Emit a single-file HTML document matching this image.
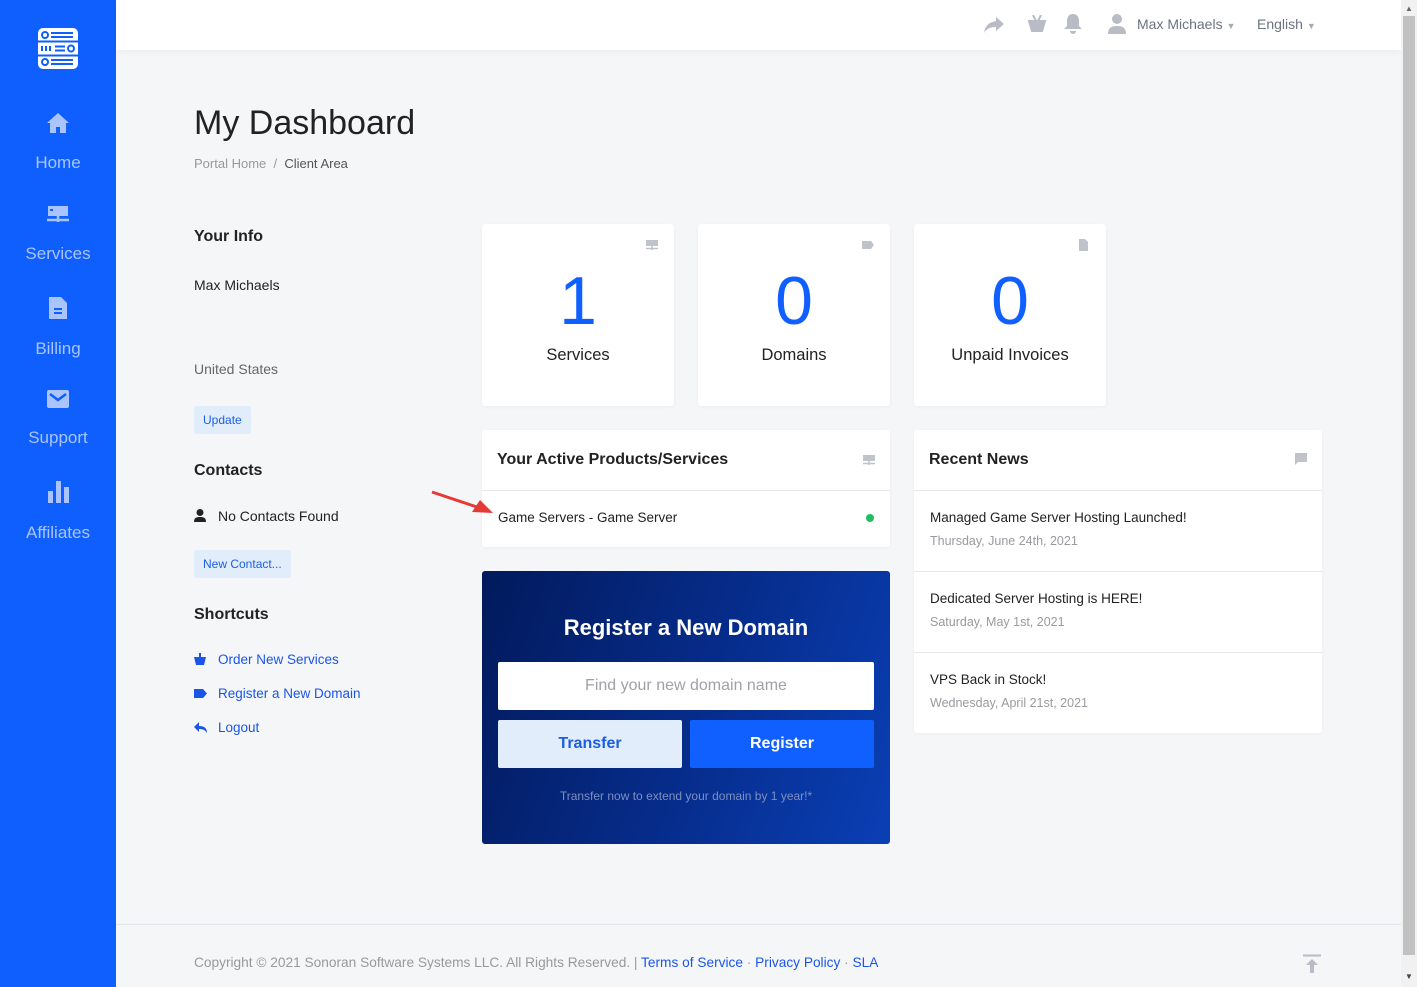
<!DOCTYPE html>
<html><head><meta charset="utf-8"><style>
*{box-sizing:border-box;margin:0;padding:0}
body{width:1417px;height:987px;overflow:hidden;background:#f5f6f8;font-family:"Liberation Sans",sans-serif;position:relative;color:#222}
.side{position:absolute;left:0;top:0;width:116px;height:987px;background:#0f5fff}
.nav{position:absolute;left:0;width:116px;text-align:center;color:#a9c4ff;font-size:17px}
.nav svg{display:block;margin:0 auto 20px}
.top{position:absolute;left:116px;top:0;width:1285px;height:50px;background:#fff;box-shadow:0 2px 6px rgba(0,0,0,.04)}
.sb{position:absolute;left:1401px;top:0;width:16px;height:987px;background:#f1f1f1}
.abs{position:absolute}
.h{font-size:16px;font-weight:bold;color:#222}
.card{position:absolute;background:#fff;border-radius:3px;box-shadow:0 1px 3px rgba(0,0,0,.04)}
.stat{width:192px;height:182px;top:224px;text-align:center}
.stat .n{font-size:68px;color:#1060ff;margin-top:42px;line-height:70px}
.stat .l{font-size:16.5px;color:#222;margin-top:10px}
.btnl{position:absolute;background:#e2edfc;color:#1a5fe0;font-size:12px;border-radius:2px;padding:0 9px;height:28px;line-height:28px}
.lnk{color:#1a55e8;font-size:13.5px}
.news{position:absolute;left:0;width:408px;height:81px;border-top:1px solid #e8e8ec;padding:19px 16px}
.news .t{font-size:13.5px;color:#222}
.news .d{font-size:12.5px;color:#9a9aa0;margin-top:9px}
</style></head><body>
<div class="side">
 <svg class="abs" style="left:38px;top:28px" width="40" height="41" viewBox="0 0 40 41"><rect width="40" height="41" rx="5" fill="#fff"/><g fill="none" stroke="#0f5fff" stroke-width="2"><circle cx="7" cy="7" r="3"/><circle cx="33" cy="20.5" r="3"/><circle cx="7" cy="34" r="3"/><path d="M13 5h22M13 9h22M4 18v5M8 18v5M12 18v5M17 18.5h10M17 22.5h10M13 32h22M13 36h22M0 13.5h40M0 27.5h40"/></g></svg>
 <div class="nav" style="top:113px"><svg width="22" height="20" viewBox="0 0 22 20"><path d="M11 0L0 10h3v10h6v-6h4v6h6V10h3z" fill="#a9c4ff"/></svg>Home</div>
 <div class="nav" style="top:206px"><svg width="22" height="18" viewBox="0 0 22 18"><rect x="1" y="0" width="20" height="10" fill="#a9c4ff"/><rect x="3" y="3" width="3" height="2" fill="#0f5fff"/><path d="M0 14h22M11 10v6" stroke="#a9c4ff" stroke-width="2.5"/></svg>Services</div>
 <div class="nav" style="top:297px"><svg width="18" height="22" viewBox="0 0 18 22"><path d="M0 0h12l6 6v16H0z" fill="#a9c4ff"/><path d="M5 12h8M5 16h8" stroke="#0f5fff" stroke-width="2"/></svg>Billing</div>
 <div class="nav" style="top:390px"><svg width="22" height="18" viewBox="0 0 22 18"><rect width="22" height="18" rx="2" fill="#a9c4ff"/><path d="M3 4l8 6 8-6" stroke="#0f5fff" stroke-width="2.5" fill="none"/></svg>Support</div>
 <div class="nav" style="top:481px"><svg width="22" height="22" viewBox="0 0 22 22"><rect x="1" y="10" width="5" height="12" fill="#a9c4ff"/><rect x="9" y="0" width="5" height="22" fill="#a9c4ff"/><rect x="17" y="6" width="5" height="16" fill="#a9c4ff"/></svg>Affiliates</div>
</div>
<div class="top">
 <svg class="abs" style="left:868px;top:17px" width="20" height="16" viewBox="0 0 20 16"><path d="M12 0l8 7-8 7V10C6 10 2 12 0 16 1 9 5 5 12 4z" fill="#b9bcc6"/></svg>
 <svg class="abs" style="left:911px;top:15px" width="20" height="18" viewBox="0 0 20 18"><path d="M2 6h16l-3 10H5zM6 0l3 6M14 0l-3 6" fill="#b9bcc6" stroke="#b9bcc6" stroke-width="2"/></svg>
 <svg class="abs" style="left:948px;top:14px" width="18" height="20" viewBox="0 0 18 20"><path d="M9 0c4 0 6 3 6 7v5l3 3H0l3-3V7c0-4 2-7 6-7zM6 17h6a3 3 0 01-6 0z" fill="#b9bcc6"/></svg>
 <svg class="abs" style="left:992px;top:14px" width="18" height="20" viewBox="0 0 18 20"><circle cx="9" cy="5" r="5" fill="#b9bcc6"/><path d="M0 20c0-6 3-8 9-8s9 2 9 8z" fill="#b9bcc6"/></svg>
 <div class="abs" style="left:1021px;top:16px;font-size:14px;color:#6b7280">Max Michaels <span style="font-size:9px;color:#aaa">▼</span></div>
 <div class="abs" style="left:1141px;top:16px;font-size:14px;color:#6b7280">English <span style="font-size:9px;color:#aaa">▼</span></div>
</div>
<div class="sb"><div class="abs" style="left:2px;top:16px;width:12px;height:939px;background:#c1c1c1"></div><div class="abs" style="left:4px;top:4px;font-size:8px;color:#666">▲</div><div class="abs" style="left:4px;top:972px;font-size:8px;color:#444">▼</div></div>

<div class="abs" style="left:194px;top:104px;font-size:34px;color:#222">My Dashboard</div>
<div class="abs" style="left:194px;top:156px;font-size:13px;color:#999">Portal Home &nbsp;/&nbsp; <span style="color:#555">Client Area</span></div>

<div class="abs h" style="left:194px;top:228px">Your Info</div>
<div class="abs" style="left:194px;top:277px;font-size:14px">Max Michaels</div>
<div class="abs" style="left:194px;top:361px;font-size:14px;color:#666">United States</div>
<div class="btnl" style="left:194px;top:406px">Update</div>
<div class="abs h" style="left:194px;top:462px">Contacts</div>
<svg class="abs" style="left:194px;top:509px" width="12" height="13" viewBox="0 0 12 13"><circle cx="6" cy="3.5" r="3.5" fill="#222"/><path d="M0 13c0-4 2-5 6-5s6 1 6 5z" fill="#222"/></svg>
<div class="abs" style="left:218px;top:508px;font-size:14px">No Contacts Found</div>
<div class="btnl" style="left:194px;top:550px">New Contact...</div>
<div class="abs h" style="left:194px;top:606px">Shortcuts</div>
<svg class="abs" style="left:194px;top:653px" width="12" height="12" viewBox="0 0 12 12"><path d="M0 4h12l-2 8H2zM5 0h2v4H5z" fill="#1a55e8"/></svg>
<div class="abs lnk" style="left:218px;top:652px">Order New Services</div>
<svg class="abs" style="left:194px;top:689px" width="13" height="9" viewBox="0 0 13 9"><path d="M0 0h9l4 4.5L9 9H0z" fill="#1a55e8"/></svg>
<div class="abs lnk" style="left:218px;top:686px">Register a New Domain</div>
<svg class="abs" style="left:194px;top:722px" width="13" height="11" viewBox="0 0 13 11"><path d="M5 0L0 5l5 5V7c4 0 6 1 8 4 0-5-3-7-8-7z" fill="#1a55e8"/></svg>
<div class="abs lnk" style="left:218px;top:720px">Logout</div>

<div class="card stat" style="left:482px"><svg class="abs" style="left:164px;top:16px" width="12" height="10" viewBox="0 0 12 10"><rect width="12" height="6" fill="#c0c3ca"/><path d="M0 8.5h12M6 6v4" stroke="#c0c3ca" stroke-width="1.5"/></svg><div class="n">1</div><div class="l">Services</div></div>
<div class="card stat" style="left:698px"><svg class="abs" style="left:164px;top:17px" width="12" height="8" viewBox="0 0 12 8"><path d="M0 0h9l3 4-3 4H0z" fill="#c0c3ca"/></svg><div class="n">0</div><div class="l">Domains</div></div>
<div class="card stat" style="left:914px"><svg class="abs" style="left:165px;top:15px" width="9" height="12" viewBox="0 0 9 12"><path d="M0 0h6l3 3v9H0z" fill="#c0c3ca"/></svg><div class="n">0</div><div class="l">Unpaid Invoices</div></div>

<div class="card" style="left:482px;top:430px;width:408px;height:117px">
 <div class="abs h" style="left:15px;top:21px">Your Active Products/Services</div>
 <svg class="abs" style="left:381px;top:25px" width="12" height="10" viewBox="0 0 12 10"><rect width="12" height="6" fill="#c0c3ca"/><path d="M0 8.5h12M6 6v4" stroke="#c0c3ca" stroke-width="1.5"/></svg>
 <div class="abs" style="left:0;top:60px;width:408px;border-top:1px solid #e8e8ec"></div>
 <div class="abs" style="left:16px;top:80px;font-size:13.5px">Game Servers - Game Server</div>
 <div class="abs" style="left:384px;top:84px;width:8px;height:8px;border-radius:50%;background:#20c060"></div>
</div>
<svg class="abs" style="left:430px;top:490px" width="65" height="25" viewBox="0 0 65 25"><path d="M2 2L50 18" stroke="#e53935" stroke-width="3"/><path d="M63 23L42 22 50 10z" fill="#e53935"/></svg>

<div class="abs" style="left:482px;top:571px;width:408px;height:273px;border-radius:3px;background:linear-gradient(110deg,#021a5c 0%,#062b88 50%,#0a3fb5 100%)">
 <div class="abs" style="left:0;top:44px;width:408px;text-align:center;font-size:22px;font-weight:bold;color:#fff">Register a New Domain</div>
 <div class="abs" style="left:16px;top:91px;width:376px;height:48px;background:#fff;border-radius:2px;text-align:center;line-height:48px;font-size:16px;color:#a0a0a8">Find your new domain name</div>
 <div class="abs" style="left:16px;top:149px;width:184px;height:48px;background:#e2edfc;border-radius:2px;text-align:center;line-height:48px;font-size:16px;font-weight:bold;color:#1a5fe0">Transfer</div>
 <div class="abs" style="left:208px;top:149px;width:184px;height:48px;background:#1060ff;border-radius:2px;text-align:center;line-height:48px;font-size:16px;font-weight:bold;color:#fff">Register</div>
 <div class="abs" style="left:0;top:218px;width:408px;text-align:center;font-size:12px;color:#7d8fc0">Transfer now to extend your domain by 1 year!*</div>
</div>

<div class="card" style="left:914px;top:430px;width:408px;height:303px">
 <div class="abs h" style="left:15px;top:21px">Recent News</div>
 <svg class="abs" style="left:381px;top:23px" width="12" height="12" viewBox="0 0 12 12"><path d="M0 0h12v9H3l-3 3z" fill="#c0c3ca"/></svg>
 <div class="news" style="top:60px"><div class="t">Managed Game Server Hosting Launched!</div><div class="d">Thursday, June 24th, 2021</div></div>
 <div class="news" style="top:141px"><div class="t">Dedicated Server Hosting is HERE!</div><div class="d">Saturday, May 1st, 2021</div></div>
 <div class="news" style="top:222px"><div class="t">VPS Back in Stock!</div><div class="d">Wednesday, April 21st, 2021</div></div>
</div>

<div class="abs" style="left:116px;top:924px;width:1285px;border-top:1px solid #e3e4e8"></div>
<div class="abs" style="left:194px;top:955px;font-size:13.7px;color:#999">Copyright © 2021 Sonoran Software Systems LLC. All Rights Reserved. | <span style="color:#1a55e8">Terms of Service</span> · <span style="color:#1a55e8">Privacy Policy</span> · <span style="color:#1a55e8">SLA</span></div>
<svg class="abs" style="left:1302px;top:954px" width="20" height="20" viewBox="0 0 20 20"><path d="M1 1.5h18" stroke="#b9bcc6" stroke-width="2"/><path d="M10 5l-6 6h4v8h4v-8h4z" fill="#b9bcc6"/></svg>
</body></html>
